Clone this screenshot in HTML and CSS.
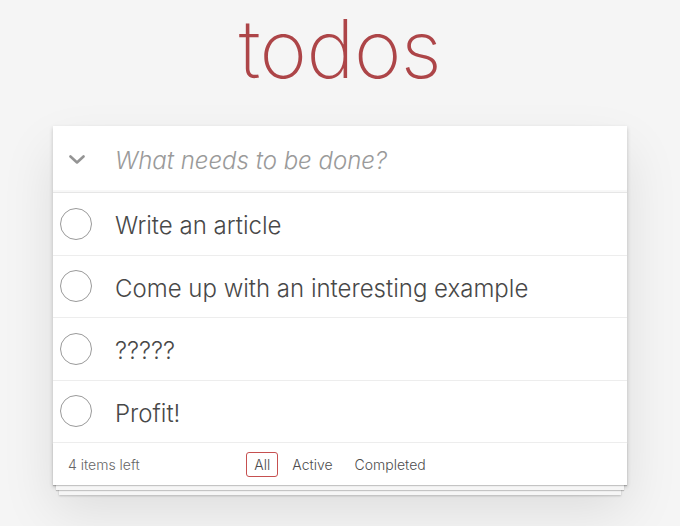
FILE: index.html
```html
<!DOCTYPE html>
<html lang="en">
<head>
<meta charset="utf-8">
<title>todos</title>
<link rel="stylesheet" href="styles.css">
</head>
<body>
<section class="todoapp">
  <h1 class="title">todos</h1>
  <div class="card">
    <header class="card-top">
      <span class="toggle-all">
        <svg width="16" height="10" viewBox="0 0 16 10"><polyline points="1.5,1.5 8,7.5 14.5,1.5" fill="none" stroke="#949494" stroke-width="2.6" stroke-linecap="round" stroke-linejoin="round"/></svg>
      </span>
      <span class="new-todo">What needs to be done?</span>
    </header>
    <ul class="todo-list">
      <li class="todo"><span class="check"></span><span class="label">Write an article</span></li>
      <li class="todo"><span class="check"></span><span class="label">Come up with an interesting example</span></li>
      <li class="todo"><span class="check"></span><span class="label">?????</span></li>
      <li class="todo"><span class="check"></span><span class="label">Profit!</span></li>
    </ul>
    <footer class="footer">
      <span class="count">4 items left</span>
      <ul class="filters">
        <li><a class="filter selected">All</a></li>
        <li><a class="filter">Active</a></li>
        <li><a class="filter">Completed</a></li>
      </ul>
      <span></span>
    </footer>
  </div>
</section>
</body>
</html>
```

FILE: styles.css
```css
html, body { margin: 0; padding: 0; }
html { background: #f5f5f5; }
body {
  min-height: 526px;
  background: #f5f5f5;
  font-family: Inter, "Helvetica Neue", Arial, sans-serif;
  font-weight: 300;
  color: #4d4d4d;
  -webkit-font-smoothing: antialiased;
}
ul { list-style: none; margin: 0; padding: 0; }
.todoapp {
  width: 574px;
  margin: 0 auto;
}
.title {
  margin: 0;
  height: 126px;
  text-align: center;
  font-size: 81px;
  line-height: 98px;
  font-weight: 150;
  color: #ad4548;
  letter-spacing: -0.5px;
}
.card {
  position: relative;
  z-index: 0;
  background: #fff;
  box-shadow: 0 2px 4px rgba(0,0,0,0.2), 0 25px 50px rgba(0,0,0,0.1);
}
.card-top {
  display: flex;
  align-items: center;
  height: 66px;
  box-shadow: inset 0 -2px 1px rgba(0,0,0,0.03);
  border-bottom: 1px solid #e6e6e6;
}
.toggle-all {
  width: 44px;
  display: flex;
  justify-content: center;
  padding-left: 2px;
  padding-top: 2px;
  margin-right: 16px;
}
.new-todo {
  font-size: 24px;
  font-style: italic;
  color: #9a9a9a;
  font-weight: 300;
  padding-top: 2px;
}
.todo {
  display: flex;
  align-items: center;
  border-bottom: 1px solid #ededed;
  height: 61.5px;
}
.check {
  width: 30px;
  height: 30px;
  border: 1px solid #9a9a9a;
  border-radius: 50%;
  margin-left: 7px;
  margin-right: 23px;
  flex: none;
}
.label {
  font-size: 24px;
  line-height: 29px;
  padding-top: 4px;
  color: #484848;
  font-weight: 350;
}
.footer {
  position: relative;
  display: grid;
  grid-template-columns: 1fr auto 1fr;
  align-items: center;
  height: 42px;
  padding: 0 15px;
  font-size: 14px;
  color: #666;
}
.footer::before {
  content: "";
  position: absolute;
  left: 0; right: 0; bottom: 0;
  height: 42px;
  z-index: -1;
  box-shadow: 0 1px 1px rgba(0,0,0,0.2),
              0 8px 0 -3px #f6f6f6,
              0 9px 1px -3px rgba(0,0,0,0.2),
              0 16px 0 -6px #f6f6f6,
              0 17px 2px -6px rgba(0,0,0,0.2);
}
.count { font-weight: 300; }
.filters { display: flex; }
.filter {
  display: inline-block;
  margin: 3px;
  padding: 3px 7px;
  border: 1px solid transparent;
  border-radius: 3px;
  color: #4d4d4d;
  font-weight: 300;
}
.filter.selected { border-color: #c65050; }
```
